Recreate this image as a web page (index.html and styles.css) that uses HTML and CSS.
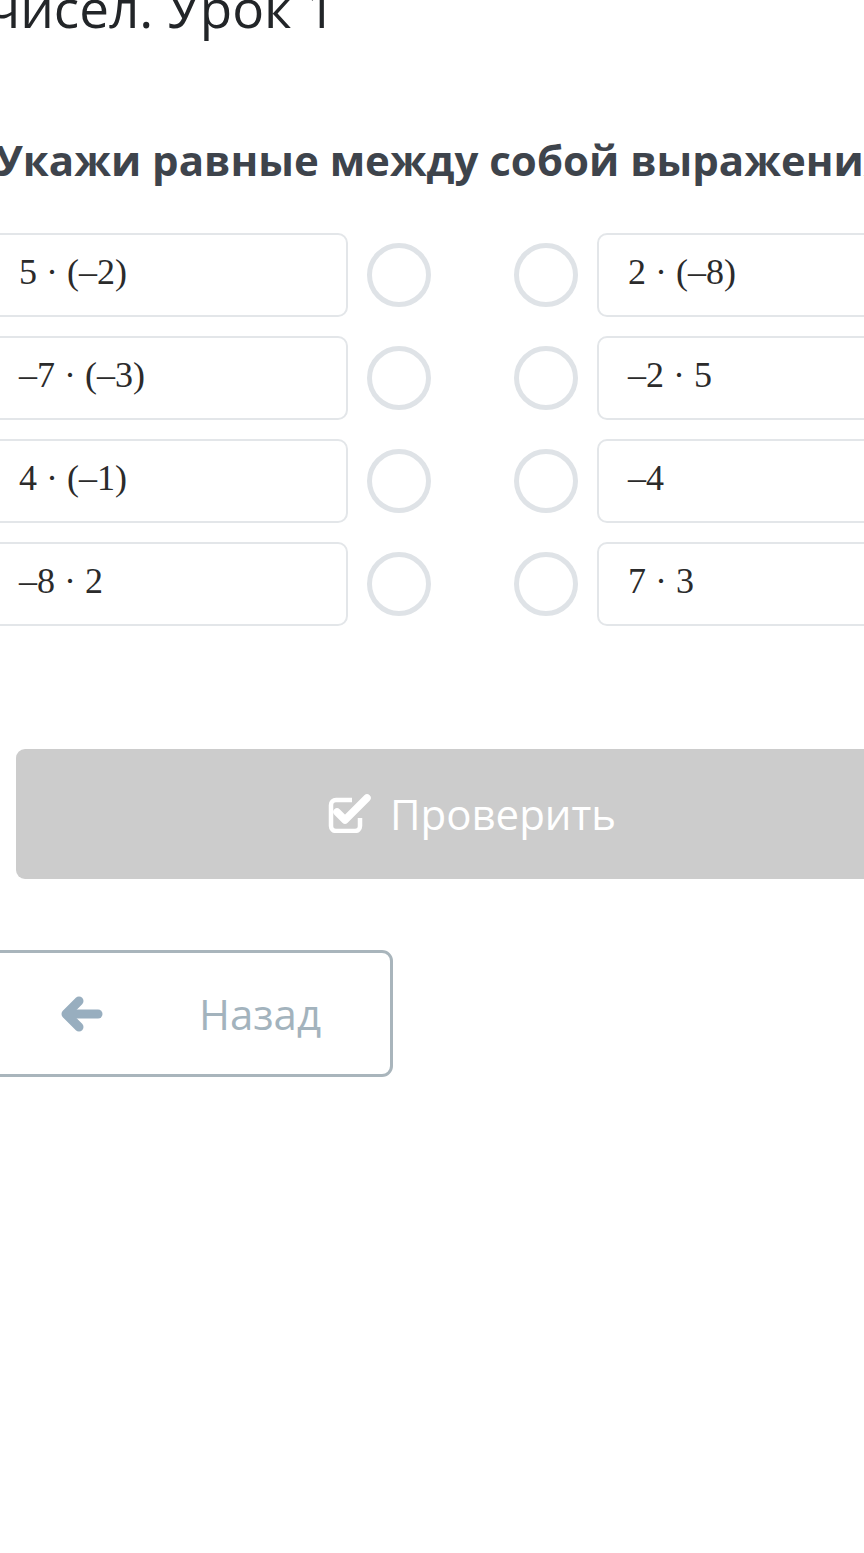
FILE: index.html
```html
<!DOCTYPE html>
<html lang="ru">
<head>
    <meta charset="UTF-8">
    <meta name="viewport" content="width=device-width, initial-scale=1.0">
    <title>Урок 1</title>
    <link rel="stylesheet" href="styles.css">
</head>
<body>
    <div class="page">
        <h1 class="lesson-title">чисел. Урок 1</h1>
        <h2 class="task-question">Укажи равные между собой выражения</h2>

        <div class="match-grid">
            <div class="match-card">5 · (–2)</div>
            <span class="match-dot"></span>
            <span class="match-dot match-dot-right"></span>
            <div class="match-card">2 · (–8)</div>

            <div class="match-card">–7 · (–3)</div>
            <span class="match-dot"></span>
            <span class="match-dot match-dot-right"></span>
            <div class="match-card">–2 · 5</div>

            <div class="match-card">4 · (–1)</div>
            <span class="match-dot"></span>
            <span class="match-dot match-dot-right"></span>
            <div class="match-card">–4</div>

            <div class="match-card">–8 · 2</div>
            <span class="match-dot"></span>
            <span class="match-dot match-dot-right"></span>
            <div class="match-card">7 · 3</div>
        </div>

        <button class="btn-check" type="button">
            <svg class="check-icon" viewBox="0 0 44 40" fill="none" stroke="currentColor">
                <path d="M24 7H8a5 5 0 0 0-5 5v21a5 5 0 0 0 5 5h19a5 5 0 0 0 5-5v-8" stroke-width="4.5"/>
                <polyline points="9,19 17,27 39,5" stroke-width="7.5" stroke-linecap="round" stroke-linejoin="round"/>
            </svg>
            Проверить
        </button>

        <button class="btn-back" type="button">
            <svg class="back-icon" viewBox="0 0 42 36" fill="none" stroke="currentColor" stroke-width="9" stroke-linecap="round" stroke-linejoin="round">
                <polyline points="18,5 5,18 18,31"/>
                <line x1="6" y1="18" x2="37" y2="18"/>
            </svg>
            <span>Назад</span>
        </button>
    </div>
</body>
</html>
```

FILE: styles.css
```css
:root {
    --text-title: #222528;
    --text-question: #3e444c;
    --text-math: #2b2b2b;
    --border-card: #e3e6e9;
    --dot-ring: #dfe3e7;
    --btn-disabled: #cccccc;
    --back-border: #a9b5bc;
    --back-text: #a3b3bd;
    --back-icon: #98aebf;
}

* {
    margin: 0;
    padding: 0;
    box-sizing: border-box;
}

body {
    background: #fff;
    font-family: "Open Sans", "Noto Sans", sans-serif;
    width: 864px;
    height: 1553px;
    overflow: hidden;
}

.page {
    margin-left: -12px;
    width: 969px;
}

.lesson-title {
    margin: -20px 0 0 0;
    font-size: 53px;
    font-weight: 400;
    line-height: 56px;
    color: var(--text-title);
    white-space: nowrap;
}

.task-question {
    margin: 96px 0 0 7px;
    font-size: 42px;
    font-weight: 700;
    line-height: 56px;
    color: var(--text-question);
    white-space: nowrap;
}

.match-grid {
    margin-top: 45px;
    display: grid;
    grid-template-columns: 360px 64px 64px 360px;
    column-gap: 19px;
    row-gap: 19px;
    align-items: center;
}

.match-card {
    height: 84px;
    display: flex;
    align-items: center;
    padding: 0 0 6px 29px;
    border: 2px solid var(--border-card);
    border-radius: 10px;
    font-family: "Liberation Serif", "Times New Roman", serif;
    font-size: 36px;
    color: var(--text-math);
    white-space: nowrap;
}

.match-dot {
    width: 64px;
    height: 64px;
    border: 5px solid var(--dot-ring);
    border-radius: 50%;
}

.match-dot-right {
    margin-left: 64px;
}

.match-grid .match-card:nth-child(4n) {
    margin-left: 64px;
    width: 360px;
}

.btn-check {
    margin: 123px 0 0 28px;
    width: 912px;
    height: 130px;
    display: flex;
    align-items: center;
    justify-content: center;
    gap: 18px;
    background: var(--btn-disabled);
    border: none;
    border-radius: 9px;
    color: #fff;
    font-family: inherit;
    font-size: 42px;
    font-weight: 400;
    padding-bottom: 2px;
}

.check-icon {
    width: 44px;
    height: 40px;
    flex-shrink: 0;
}

.btn-back {
    margin: 71px 0 0 -8px;
    width: 413px;
    height: 127px;
    display: flex;
    align-items: center;
    gap: 96px;
    padding-left: 78px;
    background: #fff;
    border: 3px solid var(--back-border);
    border-radius: 11px;
    color: var(--back-text);
    font-family: inherit;
    font-size: 42px;
    font-weight: 400;
}

.back-icon {
    width: 42px;
    height: 36px;
    color: var(--back-icon);
    flex-shrink: 0;
}
```
